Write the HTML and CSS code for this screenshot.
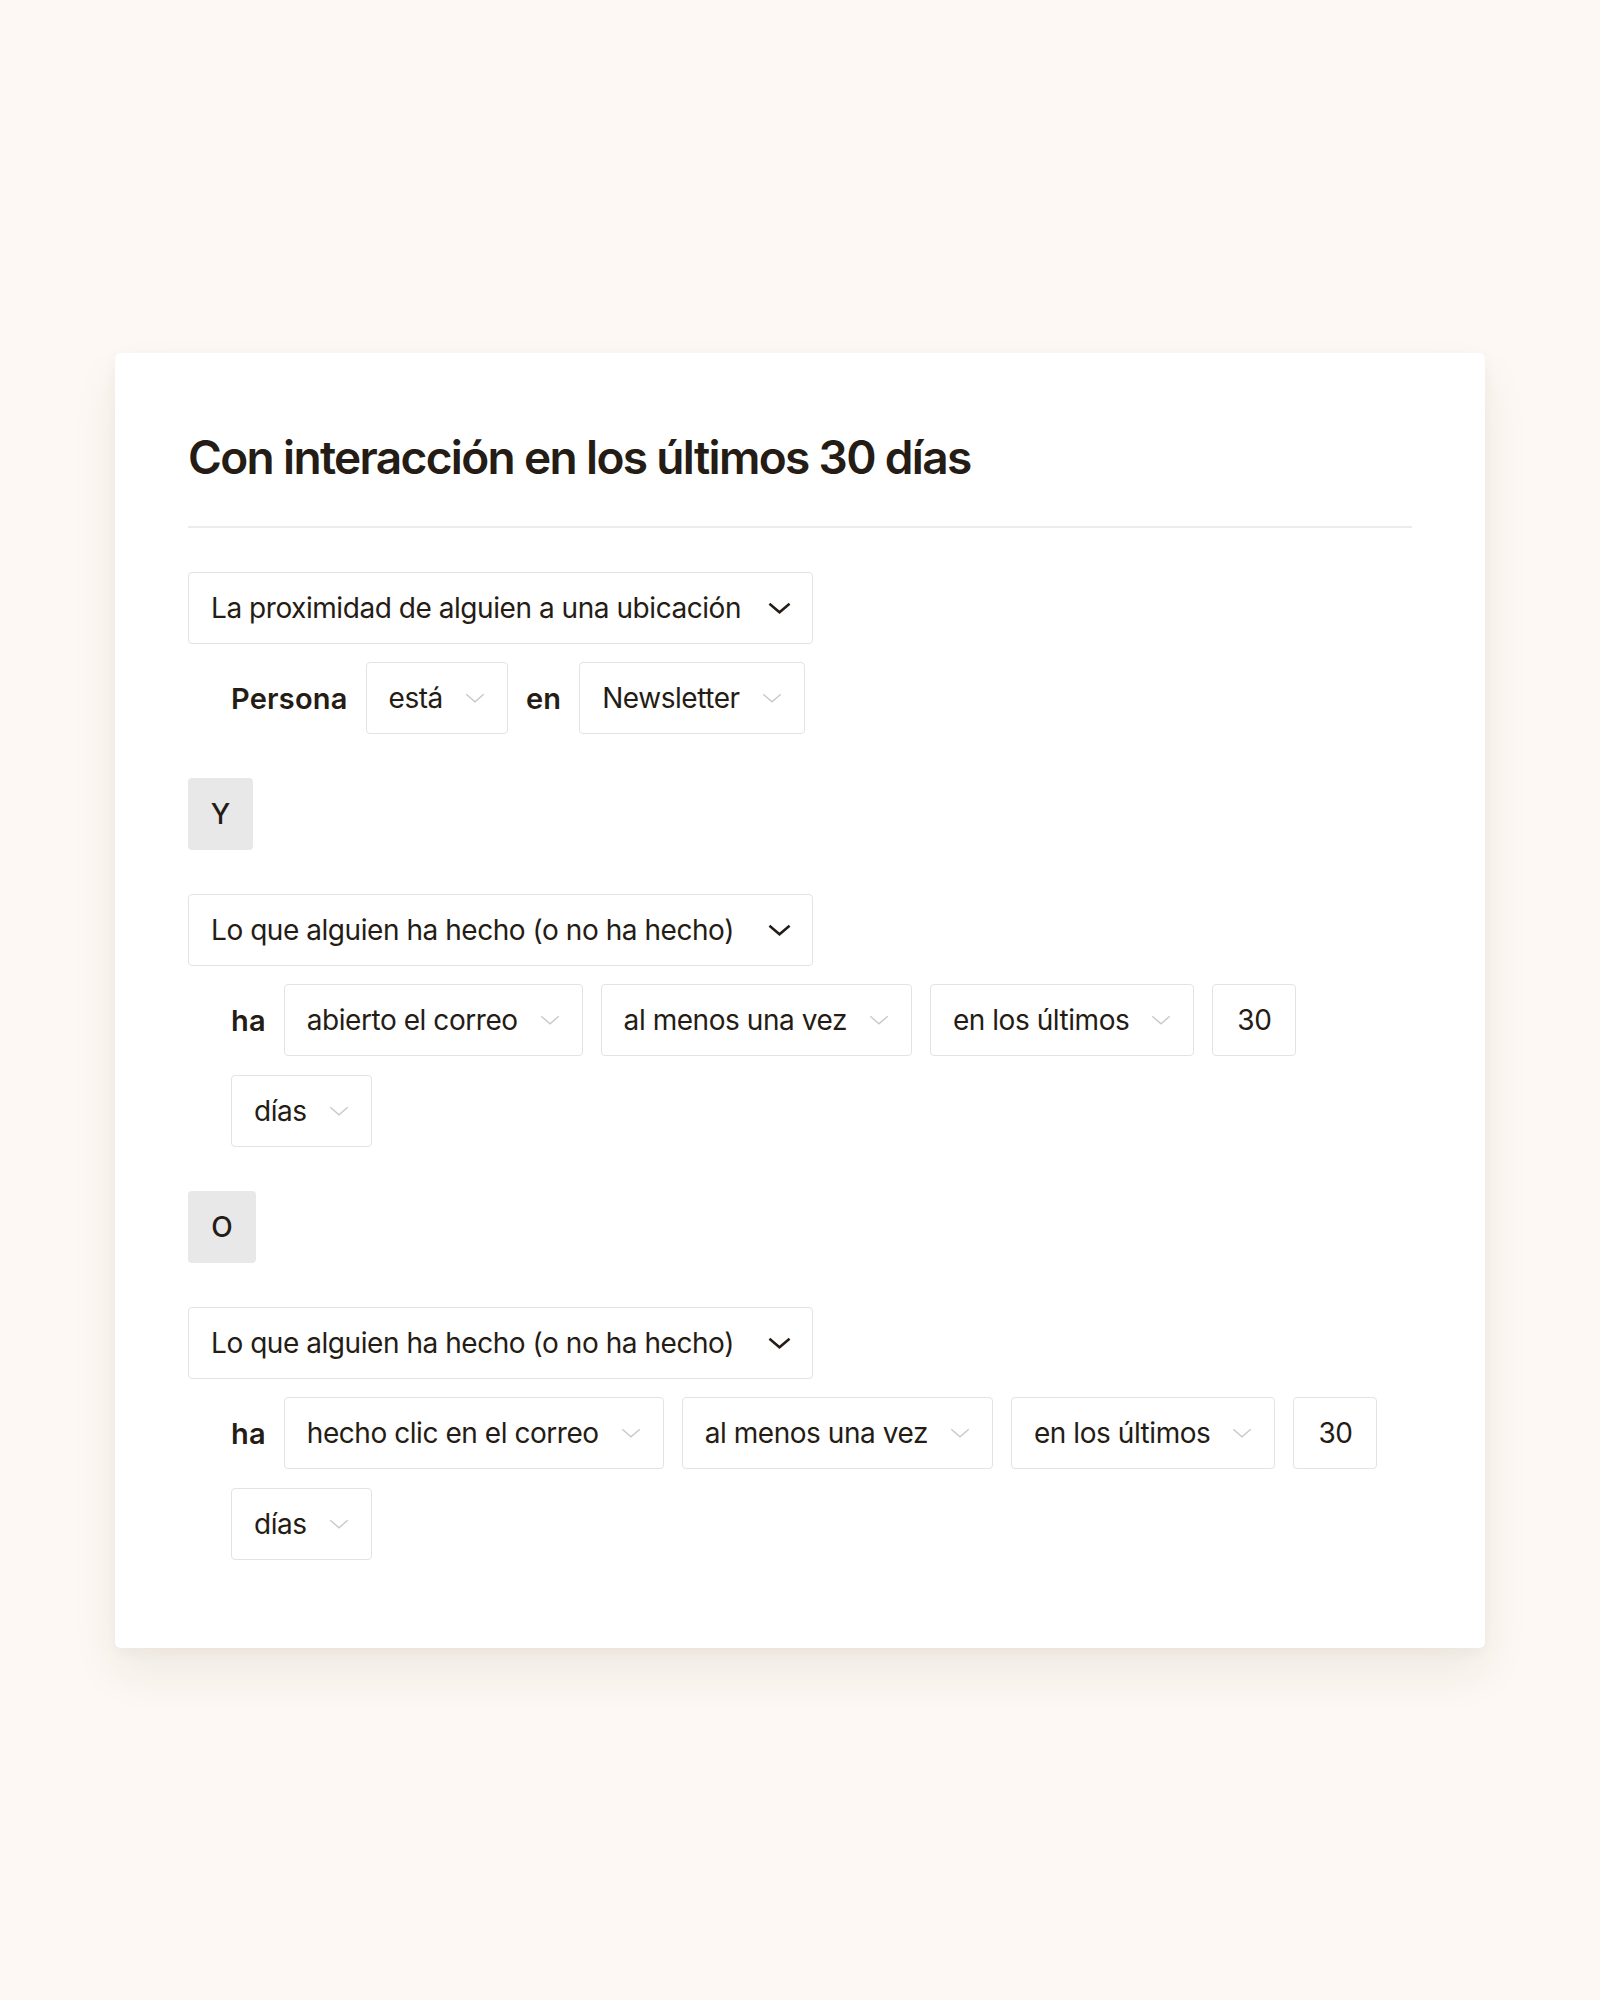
FILE: index.html
```html
<!DOCTYPE html>
<html lang="es">
<head>
<meta charset="utf-8">
<title>Segmento</title>
<link rel="stylesheet" href="styles.css">
</head>
<body>
<main class="page">
  <section class="card">
    <h1 class="title">Con interacción en los últimos 30 días</h1>
    <div class="divider"></div>
    <div class="rules">
      <div class="condition">
        <div class="select select-main"><span>La proximidad de alguien a una ubicación</span>
          <svg class="chev chev-dark" viewBox="0 0 24 12"><path d="M1.5 1.5 L12 10.5 L22.5 1.5"/></svg></div>
        <div class="row">
          <span class="word">Persona</span>
          <div class="select"><span>está</span><svg class="chev" viewBox="0 0 24 12"><path d="M1.5 1.5 L12 10.5 L22.5 1.5"/></svg></div>
          <span class="word">en</span>
          <div class="select"><span>Newsletter</span><svg class="chev" viewBox="0 0 24 12"><path d="M1.5 1.5 L12 10.5 L22.5 1.5"/></svg></div>
        </div>
      </div>

      <div class="op op-y">Y</div>

      <div class="condition">
        <div class="select select-main"><span>Lo que alguien ha hecho (o no ha hecho)</span>
          <svg class="chev chev-dark" viewBox="0 0 24 12"><path d="M1.5 1.5 L12 10.5 L22.5 1.5"/></svg></div>
        <div class="row">
          <span class="word">ha</span>
          <div class="select"><span>abierto el correo</span><svg class="chev" viewBox="0 0 24 12"><path d="M1.5 1.5 L12 10.5 L22.5 1.5"/></svg></div>
          <div class="select"><span>al menos una vez</span><svg class="chev" viewBox="0 0 24 12"><path d="M1.5 1.5 L12 10.5 L22.5 1.5"/></svg></div>
          <div class="select"><span>en los últimos</span><svg class="chev" viewBox="0 0 24 12"><path d="M1.5 1.5 L12 10.5 L22.5 1.5"/></svg></div>
          <div class="select select-num"><span>30</span></div>
          <div class="select"><span>días</span><svg class="chev" viewBox="0 0 24 12"><path d="M1.5 1.5 L12 10.5 L22.5 1.5"/></svg></div>
        </div>
      </div>

      <div class="op op-o">O</div>

      <div class="condition">
        <div class="select select-main"><span>Lo que alguien ha hecho (o no ha hecho)</span>
          <svg class="chev chev-dark" viewBox="0 0 24 12"><path d="M1.5 1.5 L12 10.5 L22.5 1.5"/></svg></div>
        <div class="row">
          <span class="word">ha</span>
          <div class="select"><span>hecho clic en el correo</span><svg class="chev" viewBox="0 0 24 12"><path d="M1.5 1.5 L12 10.5 L22.5 1.5"/></svg></div>
          <div class="select"><span>al menos una vez</span><svg class="chev" viewBox="0 0 24 12"><path d="M1.5 1.5 L12 10.5 L22.5 1.5"/></svg></div>
          <div class="select"><span>en los últimos</span><svg class="chev" viewBox="0 0 24 12"><path d="M1.5 1.5 L12 10.5 L22.5 1.5"/></svg></div>
          <div class="select select-num"><span>30</span></div>
          <div class="select"><span>días</span><svg class="chev" viewBox="0 0 24 12"><path d="M1.5 1.5 L12 10.5 L22.5 1.5"/></svg></div>
        </div>
      </div>
    </div>
  </section>
</main>
</body>
</html>
```
FILE: styles.css
```css
* { box-sizing: border-box; }

html, body {
  margin: 0;
  padding: 0;
  background: #fdf8f3;
}

body {
  font-family: Inter, "Liberation Sans", Arial, sans-serif;
  color: #241c15;
}

.page {
  padding: 353px 0 0 115px;
  min-height: 2000px;
}

.card {
  width: 1370px;
  background: #ffffff;
  border-radius: 6px;
  padding: 76px 73px 88px 73px;
  box-shadow: 0 24px 48px rgba(60, 40, 20, 0.07), 0 4px 14px rgba(60, 40, 20, 0.04);
}

.title {
  margin: 0;
  font-size: 46px;
  line-height: 56px;
  font-weight: 600;
  letter-spacing: -1.65px;
}

.divider {
  margin-top: 41px;
  height: 2px;
  background: #ececec;
}

.rules {
  margin-top: 44px;
  display: flex;
  flex-direction: column;
  align-items: flex-start;
  gap: 44px;
}

.condition {
  display: flex;
  flex-direction: column;
  gap: 18px;
  width: 100%;
}

.row {
  display: flex;
  flex-wrap: wrap;
  align-items: center;
  gap: 19px 18px;
  padding-left: 43px;
}

.word {
  font-size: 29px;
  font-weight: 600;
  letter-spacing: 0.2px;
}

.select {
  display: inline-flex;
  align-items: center;
  gap: 22px;
  height: 72px;
  padding: 0 22px 0 22px;
  border: 1.5px solid #e3e3e3;
  border-radius: 4px;
  background: #fff;
  font-size: 28px;
  letter-spacing: -0.45px;
  white-space: nowrap;
}

.select-main {
  width: 625px;
  justify-content: space-between;
  padding: 0 21px 0 22px;
}

.select-num {
  padding: 0 24px;
}

.chev {
  width: 20px;
  height: 10px;
  fill: none;
  stroke: #c8c8c8;
  stroke-width: 1.6;
  flex: none;
}

.chev-dark {
  width: 23px;
  height: 12px;
  stroke: #241c15;
  stroke-width: 2.6;
}

.op {
  height: 72px;
  display: flex;
  align-items: center;
  justify-content: center;
  background: #e8e8e8;
  border-radius: 4px;
  font-size: 28px;
  font-weight: 500;
}

.op-y { width: 65px; }
.op-o { width: 68px; }
```
